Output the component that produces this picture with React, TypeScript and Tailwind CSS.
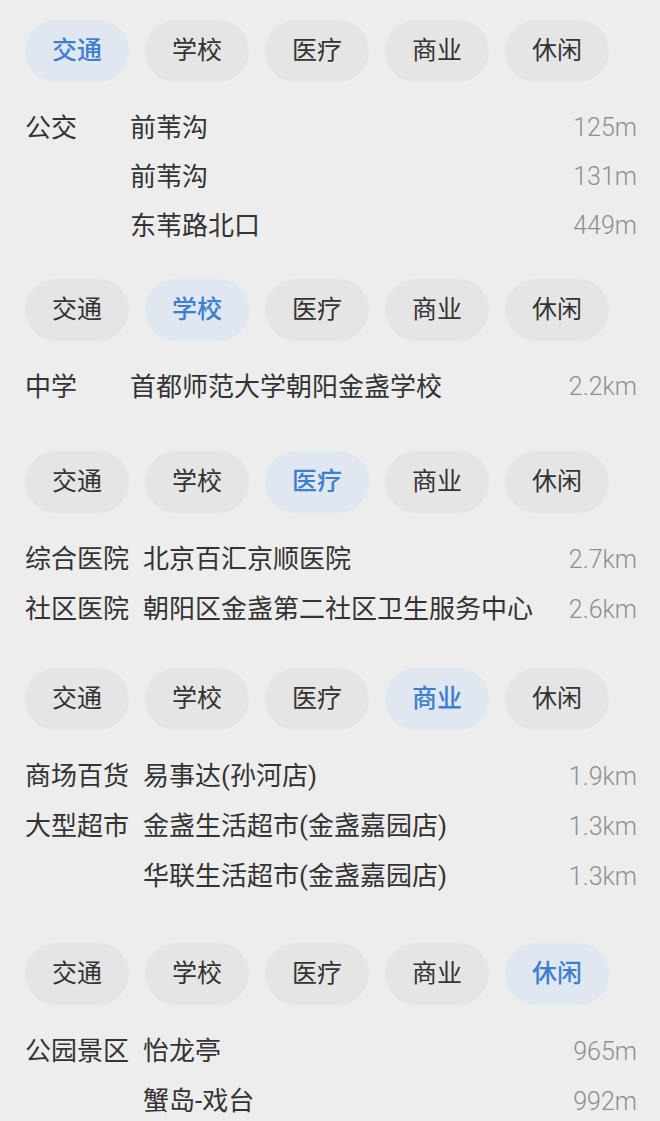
const TABS = ["交通", "学校", "医疗", "商业", "休闲"];

type Row = { label?: string; name: string; dist: string };

type Section = { active: number; top: string; rowH: string; rows: Row[] };

const SECTIONS: Section[] = [
  {
    active: 0,
    top: "mt-[20px]",
    rowH: "h-[49px]",
    rows: [
      { label: "公交", name: "前苇沟", dist: "125m" },
      { name: "前苇沟", dist: "131m" },
      { name: "东苇路北口", dist: "449m" },
    ],
  },
  {
    active: 1,
    top: "mt-[29px]",
    rowH: "h-[49px]",
    rows: [{ label: "中学", name: "首都师范大学朝阳金盏学校", dist: "2.2km" }],
  },
  {
    active: 2,
    top: "mt-[40px]",
    rowH: "h-[50px]",
    rows: [
      { label: "综合医院", name: "北京百汇京顺医院", dist: "2.7km" },
      { label: "社区医院", name: "朝阳区金盏第二社区卫生服务中心", dist: "2.6km" },
    ],
  },
  {
    active: 3,
    top: "mt-[34px]",
    rowH: "h-[50px]",
    rows: [
      { label: "商场百货", name: "易事达(孙河店)", dist: "1.9km" },
      { label: "大型超市", name: "金盏生活超市(金盏嘉园店)", dist: "1.3km" },
      { name: "华联生活超市(金盏嘉园店)", dist: "1.3km" },
    ],
  },
  {
    active: 4,
    top: "mt-[42px]",
    rowH: "h-[50px]",
    rows: [
      { label: "公园景区", name: "怡龙亭", dist: "965m" },
      { name: "蟹岛-戏台", dist: "992m" },
    ],
  },
];

function Tabs({ active }: { active: number }) {
  return (
    <div className="flex gap-[16px]">
      {TABS.map((t, i) => (
        <div
          key={t}
          className={
            i === active
              ? "w-[104px] h-[62px] rounded-full bg-[#dfe7f1] text-[#3f7fcf] font-medium flex items-center justify-center text-[25px]"
              : "w-[104px] h-[62px] rounded-full bg-[#e5e5e5] text-[#333333] flex items-center justify-center text-[25px]"
          }
        >
          {t}
        </div>
      ))}
    </div>
  );
}

function SectionBlock({ s }: { s: Section }) {
  const wide = s.rows.some((r) => r.label && r.label.length > 2);
  return (
    <div className={s.top}>
      <Tabs active={s.active} />
      <div className="mt-[21px]">
        {s.rows.map((r, i) => (
          <div key={i} className={`flex items-center ${s.rowH} text-[26px] leading-none`}>
            <div className={wide ? "w-[118px] shrink-0 text-[#333333]" : "w-[105px] shrink-0 text-[#333333]"}>
              {r.label ?? ""}
            </div>
            <div className="flex-1 text-[#333333] whitespace-nowrap">{r.name}</div>
            <div className="text-[#8f8f8f] text-[25px] font-light">{r.dist}</div>
          </div>
        ))}
      </div>
    </div>
  );
}

export default function App() {
  return (
    <div
      className="w-[660px] h-[1121px] overflow-hidden bg-[#ededed] pl-[25px] pr-[23px] pt-px"
      style={{ fontFamily: 'Roboto, "Noto Sans CJK SC", sans-serif' }}
    >
      <div className="-mt-px">
        {SECTIONS.map((s, i) => (
          <SectionBlock key={i} s={s} />
        ))}
      </div>
    </div>
  );
}
